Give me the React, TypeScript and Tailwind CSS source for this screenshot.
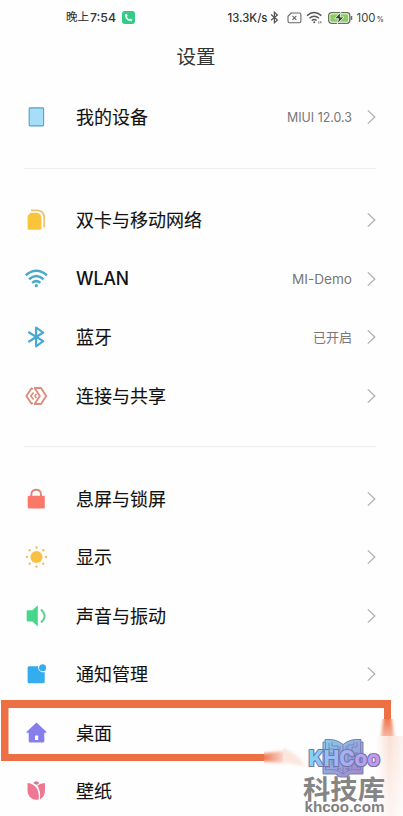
import type { ReactNode } from "react";

type Row = {
  label: string;
  icon: ReactNode;
  value?: string;
  valueWidth?: number;
  labelWidth?: number;
  noArrow?: boolean;
};

const DeviceIcon = () => (
  <svg width="24" height="24" viewBox="0 0 24 24">
    <rect x="5.2" y="2.9" width="14.4" height="18" rx="0.8" fill="#a6defa" stroke="#5a9fc0" strokeWidth="1.1" />
  </svg>
);

const SimIcon = () => (
  <svg width="24" height="24" viewBox="0 0 24 24">
    <path d="M7 2.4H13.6Q20.2 3 20.2 10V19.3" fill="none" stroke="#e8c376" strokeWidth="1.7" />
    <path d="M6.6 4.8H12.6Q17.4 5.4 17.4 10.4V20.2Q17.4 21.7 15.9 21.7H5Q3.6 21.7 3.6 20.2V7.8Z" fill="#fbc53b" />
  </svg>
);

const WlanIcon = () => (
  <svg width="24" height="24" viewBox="0 0 24 24" fill="none" stroke="#48a9c9" strokeWidth="2.5">
    <path d="M1.7 8.3Q12.3 -0.8 22.9 8.3" />
    <path d="M5 12.2Q12.3 5.9 19.6 12.2" />
    <path d="M8.2 15.9Q12.3 12.3 16.4 15.9" />
    <circle cx="12.3" cy="18.7" r="1.6" fill="#48a9c9" stroke="none" />
  </svg>
);

const BluetoothIcon = () => (
  <svg width="24" height="24" viewBox="0 0 24 24" fill="none" stroke="#43a8d6" strokeWidth="2.1">
    <path d="M4.3 7L19.2 16.2L12.1 21.4V2.6L19.2 7.5L4.3 17" strokeLinejoin="round" />
  </svg>
);

const ShareIcon = () => (
  <svg width="24" height="24" viewBox="0 0 24 24" fill="none" stroke="#dd8c7d" strokeWidth="1.9" strokeLinejoin="round">
    <path d="M8.8 5.2L7.3 4.4L2.4 12L7.3 19.6L8.8 18.8" />
    <path d="M10.6 4H17L22.2 12L17 20H10.6L15.8 12Z" />
    <path d="M9.6 8.4L6.8 12L9.6 15.6M12.4 10L11 12L12.4 14" strokeWidth="1.6" />
  </svg>
);

const LockIcon = () => (
  <svg width="24" height="24" viewBox="0 0 24 24">
    <path d="M7.4 10V7.2C7.4 1.2 16.9 1.2 16.9 7.2V10" fill="none" stroke="#d98577" strokeWidth="1.9" />
    <rect x="3.7" y="8.8" width="17.1" height="12.6" rx="1.3" fill="#fb7868" />
  </svg>
);

const SunIcon = () => (
  <svg width="24" height="24" viewBox="0 0 24 24" fill="#f8c143">
    <circle cx="12.5" cy="12" r="6.1" />
    <g fill="#e9c36c">
      <circle cx="12.5" cy="2.5" r="1.2" />
      <circle cx="12.5" cy="21.5" r="1.2" />
      <circle cx="3" cy="12" r="1.2" />
      <circle cx="22" cy="12" r="1.2" />
      <circle cx="5.7" cy="5.2" r="1.2" />
      <circle cx="19.3" cy="5.2" r="1.2" />
      <circle cx="5.7" cy="18.8" r="1.2" />
      <circle cx="19.3" cy="18.8" r="1.2" />
    </g>
  </svg>
);

const SoundIcon = () => (
  <svg width="24" height="24" viewBox="0 0 24 24">
    <path d="M3.8 6.2H8.4L13.8 1.2V22.6L8.4 17.6H3.8Q2.7 17.6 2.7 16.5V7.3Q2.7 6.2 3.8 6.2Z" fill="#46d78b" />
    <path d="M17 5.4Q24.2 12 17 18.6" fill="none" stroke="#62cf9a" strokeWidth="2" />
  </svg>
);

const NotifyIcon = () => (
  <svg width="24" height="24" viewBox="0 0 24 24" fill="#35acee">
    <path d="M5 4.2H14.2C13.8 8.5 16.5 10.6 20.7 10.1V19.8Q20.7 21.3 19.2 21.3H5Q3.6 21.3 3.6 19.8V5.7Q3.6 4.2 5 4.2Z" />
    <circle cx="18.6" cy="5.8" r="3.5" />
  </svg>
);

const HomeIcon = () => (
  <svg width="24" height="24" viewBox="0 0 24 24">
    <path d="M12.5 1.5L22.6 10.9Q22.9 11.7 22.1 11.7H20.3V19.9Q20.3 21.4 18.8 21.4H6.2Q4.7 21.4 4.7 19.9V11.7H2.9Q2.1 11.7 2.4 10.9Z" fill="#857eeb" />
    <rect x="11" y="14.4" width="3.2" height="4.6" rx="0.6" fill="#fff" />
  </svg>
);

const WallpaperIcon = () => (
  <svg width="24" height="24" viewBox="0 0 24 24">
    <path d="M9.2 4.1Q12.4 .3 15.4 4.1L12.6 6Z" fill="#cf7e8e" />
    <path d="M3.5 4.1Q15.9 5.7 14.7 20.6Q12 21 9.2 20.2Q3.5 17.7 3.5 11Z" fill="#ee7791" />
    <path d="M13.2 6.6Q16.4 4.4 21 4.1V11Q21 17.7 15.9 20.2Q17 11.8 13.2 6.6Z" fill="#ee7791" />
  </svg>
);

const groups: Row[][] = [
  [{ label: "我的设备", icon: <DeviceIcon />, value: "MIUI 12.0.3", valueWidth: 65 }],
  [
    { label: "双卡与移动网络", icon: <SimIcon /> },
    { label: "WLAN", icon: <WlanIcon />, value: "MI-Demo", valueWidth: 60, labelWidth: 53 },
    { label: "蓝牙", icon: <BluetoothIcon />, value: "已开启" },
    { label: "连接与共享", icon: <ShareIcon /> },
  ],
  [
    { label: "息屏与锁屏", icon: <LockIcon /> },
    { label: "显示", icon: <SunIcon /> },
    { label: "声音与振动", icon: <SoundIcon /> },
    { label: "通知管理", icon: <NotifyIcon /> },
    { label: "桌面", icon: <HomeIcon />, noArrow: true },
    { label: "壁纸", icon: <WallpaperIcon />, noArrow: true },
  ],
];

function StatusBar() {
  return (
    <div className="flex h-[35px] items-center pr-[17px] pl-[66px] text-[#333]">
      <span className="pt-px text-[11.5px] whitespace-nowrap [-webkit-text-stroke:0.1px_#333]">晚上</span>
      <svg width="28" height="14" className="overflow-visible font-medium">
        <text x="1" y="10.8" fontSize="12" textLength="26" lengthAdjust="spacingAndGlyphs" fill="#333">7:54</text>
      </svg>
      <svg className="ml-[5px]" width="13" height="13" viewBox="0 0 13 13">
        <rect width="13" height="13" rx="3" fill="#36c987" />
        <path d="M3.2 3.1L4.7 2.8L5.7 5L4.9 5.9Q5.7 7.5 7.3 8.2L8.2 7.4L10.3 8.5L10 10Q9.5 10.4 8.8 10.3Q3.8 9.6 2.9 4.4Q2.8 3.5 3.2 3.1Z" fill="#e5fff3" />
      </svg>
      <div className="ml-auto flex items-center">
        <svg width="42" height="14" className="overflow-visible font-medium">
          <text x="1.5" y="11.4" fontSize="11.5" textLength="40" lengthAdjust="spacingAndGlyphs" fill="#333">13.3K/s</text>
        </svg>
        <svg className="ml-[2px]" width="9" height="13" viewBox="0 0 9 13" fill="none" stroke="#555" strokeWidth="1.2">
          <path d="M1 3.5L7.4 9L4.4 11.8V1.2L7.4 4L1 9.3" />
        </svg>
        <svg className="ml-[8px]" width="15" height="12" viewBox="0 0 15 12" fill="none" stroke="#666" strokeWidth="1.1">
          <path d="M4.2 1H12.4Q13.9 1 13.9 2.5V9.2Q13.9 10.7 12.4 10.7H2.5Q1 10.7 1 9.2V4.3Z" />
          <path d="M5.4 3.9L9.4 7.9M9.4 3.9L5.4 7.9" />
        </svg>
        <svg className="ml-[4px]" width="17" height="13" viewBox="0 0 17 13" fill="none" stroke="#555" strokeWidth="1.4">
          <path d="M1 4.6Q8.2-1.5 15.4 4.6M3.4 7.2Q8.2 3.2 13 7.2M5.7 9.5Q8.2 7.5 10.7 9.5" />
          <circle cx="8.2" cy="11.2" r="1" fill="#555" stroke="none" />
          <path d="M12.8 10.3V12.6M14.8 10V12.3" strokeWidth="0.8" />
        </svg>
        <svg className="ml-[5px]" width="26" height="12" viewBox="0 0 26 12">
          <rect x="0.7" y="0.7" width="21.1" height="10.6" rx="2.8" fill="#fff" stroke="#627058" strokeWidth="1.3" />
          <rect x="2.3" y="2.3" width="17.9" height="7.4" rx="1.3" fill="#8ccc62" />
          <path d="M12.8 .2L6.6 6.7H10.5L9.3 11.8L16 5H12.2Z" fill="#364433" stroke="#e6f5df" strokeWidth="0.9" />
          <path d="M23.5 4V8" stroke="#627058" strokeWidth="1.5" />
        </svg>
        <svg className="ml-[2px]" width="30" height="14">
          <text x="0.5" y="11.2" fontSize="12" textLength="19" lengthAdjust="spacingAndGlyphs" fill="#444">100</text>
          <text x="20.8" y="11.2" fontSize="8" fontWeight="600" textLength="7" lengthAdjust="spacingAndGlyphs" fill="#555">%</text>
        </svg>
      </div>
    </div>
  );
}

function SettingRow({ label, icon, value, valueWidth, labelWidth, noArrow }: Row) {
  return (
    <div className="flex h-[58.5px] items-center pr-[26px] pl-6">
      <div className="w-[52px] shrink-0">{icon}</div>
      {labelWidth ? (
        <svg width={labelWidth} height="24" className="overflow-visible font-medium">
          <text x="0" y="18.1" fontSize="18.5" textLength={labelWidth} lengthAdjust="spacingAndGlyphs" fill="#111">{label}</text>
        </svg>
      ) : (
        <span className="pt-[2px] text-[18px] leading-6 whitespace-nowrap text-[#111] [-webkit-text-stroke:0.12px_#111]">{label}</span>
      )}
      <div className="ml-auto flex items-center">
        {value && valueWidth && (
          <svg width={valueWidth} height="20" className="overflow-visible">
            <text x="0" y="14.7" fontSize="13" textLength={valueWidth} lengthAdjust="spacingAndGlyphs" fill="#777">{value}</text>
          </svg>
        )}
        {value && !valueWidth && (
          <span className="text-[13px] leading-5 text-[#777]">{value}</span>
        )}
        {!noArrow && (
          <svg className="ml-[15px]" width="10" height="16" viewBox="0 0 10 16" fill="none" stroke="#b0b0b0" strokeWidth="1.3">
            <path d="M0.8 1.4L7.8 8L0.8 14.6" />
          </svg>
        )}
      </div>
    </div>
  );
}

// Orange frame round the desktop row; its lower right corner fades out under the watermark.
function Highlight() {
  return (
    <svg className="pointer-events-none absolute bottom-0 left-0" width="403" height="126" viewBox="0 690 403 126">
      <defs>
        <linearGradient id="fadeRight" gradientUnits="userSpaceOnUse" x1="262" x2="284" y1="0" y2="0">
          <stop offset="0" stopColor="#ed7045" />
          <stop offset="1" stopColor="#ed7045" stopOpacity="0.25" />
        </linearGradient>
        <linearGradient id="fadeDown" gradientUnits="userSpaceOnUse" x1="0" x2="0" y1="717" y2="738">
          <stop offset="0" stopColor="#ed7045" />
          <stop offset="1" stopColor="#ed7045" stopOpacity="0.45" />
        </linearGradient>
        <linearGradient id="hazeSide" x1="0" x2="1" y1="0" y2="0">
          <stop offset="0" stopColor="#f4b095" stopOpacity="0" />
          <stop offset="0.5" stopColor="#f4b095" stopOpacity="0.38" />
          <stop offset="1" stopColor="#f4b095" stopOpacity="0.12" />
        </linearGradient>
        <linearGradient id="hazeFade" x1="0" x2="0" y1="0" y2="1">
          <stop offset="0" stopColor="#fff" />
          <stop offset="1" stopColor="#fff" stopOpacity="0.3" />
        </linearGradient>
        <mask id="hazeMask">
          <rect x="370" y="736" width="33" height="80" fill="url(#hazeFade)" />
        </mask>
        <filter id="soft" x="-50%" y="-50%" width="200%" height="200%">
          <feGaussianBlur stdDeviation="1.5" />
        </filter>
        <clipPath id="hazeClip">
          <rect x="283" y="736" width="120" height="80" />
        </clipPath>
        <clipPath id="cornerClip">
          <rect x="370" y="719" width="33" height="17" />
        </clipPath>
        <clipPath id="bottomClip">
          <rect x="264" y="740" width="19" height="30" />
        </clipPath>
      </defs>
      <path d="M264 761H1V700H391V719H384V708H8.5V754H264Z" fill="#ed7045" />
      <g clipPath="url(#bottomClip)">
        <path d="M250 753.5H264L290 750V763.5L264 761.5H250Z" fill="url(#fadeRight)" filter="url(#soft)" />
      </g>
      <g clipPath="url(#cornerClip)">
        <path d="M383.5 700V718L380 744H395L391.5 718V700Z" fill="url(#fadeDown)" filter="url(#soft)" />
      </g>
      <g clipPath="url(#hazeClip)">
        <path d="M277 748Q291 746 306 767Q293 763 277 763Z" fill="#f4b095" fillOpacity="0.3" filter="url(#soft)" />
      </g>
      <rect x="376" y="736" width="27" height="80" fill="url(#hazeSide)" mask="url(#hazeMask)" />
    </svg>
  );
}

function Watermark() {
  return (
    <svg className="absolute right-0 bottom-0" width="113" height="84" viewBox="290 732 113 84">
      <defs>
        <linearGradient id="brand" gradientUnits="userSpaceOnUse" x1="307" x2="381" y1="750" y2="766">
          <stop offset="0" stopColor="#7fd6f8" />
          <stop offset="0.5" stopColor="#a3b2f5" />
          <stop offset="1" stopColor="#cf90ee" />
        </linearGradient>
        <linearGradient id="book" gradientUnits="userSpaceOnUse" x1="330" x2="357" y1="739" y2="776">
          <stop offset="0" stopColor="#86c8e9" />
          <stop offset="1" stopColor="#a888d0" />
        </linearGradient>
      </defs>
      <path d="M323 742H325V739.5Q336 738.5 343 744.5Q350 738.5 361 739.5V742H363V774H350Q348 777 346 777H340Q338 777 336 774H323Z" fill="url(#book)" stroke="#777fad" strokeWidth="1" />
      <path
        d="M325.5 742V770Q337 768 343 774Q349 768 360.5 770V742M343 745V774M329 743V749H334V768M332 742V746H338V770M340 746V751H336M357 742V747H352V769M354 742V745H348V771M346 746V752H350M328 753H332V765M358 753H355V766M326 767H330M360 767H356M337 769H341M345 769H350"
        fill="none"
        stroke="#6d77ad"
        strokeWidth="0.7"
      />
      <text
        x="308.5"
        y="765.8"
        fontSize="21"
        fontWeight="800"
        textLength="71.5"
        lengthAdjust="spacingAndGlyphs"
        fill="url(#brand)"
        stroke="#7176a6"
        strokeWidth="2.2"
        strokeLinejoin="round"
        paintOrder="stroke"
      >
        KHCoo
      </text>
      <text x="303" y="799.4" fontSize="26.5" fontWeight="700" textLength="82" lengthAdjust="spacingAndGlyphs" fill="#858585">科技库</text>
      <text x="304.5" y="812.4" fontSize="14" fontFamily="Liberation Sans, Arial, sans-serif" fontWeight="700" textLength="80" lengthAdjust="spacingAndGlyphs" fill="#808080">khcoo.com</text>
    </svg>
  );
}

export default function App() {
  return (
    <main className="relative h-[816px] w-[403px] overflow-hidden bg-[#fefefe] font-['Inter','Noto_Sans_CJK_SC',sans-serif]">
      <StatusBar />
      <h1 className="mr-[11px] flex h-[52.75px] items-start justify-center pt-[8px] text-[19.5px] leading-7 font-normal text-[#333]">
        设置
      </h1>
      {groups.map((rows, i) => (
        <section key={i}>
          {i > 0 && <div className="mr-[27px] mt-[21.5px] mb-[22px] ml-6 h-px bg-[#eee]" />}
          {rows.map((row) => (
            <SettingRow key={row.label} {...row} />
          ))}
        </section>
      ))}
      <Highlight />
      <Watermark />
    </main>
  );
}
